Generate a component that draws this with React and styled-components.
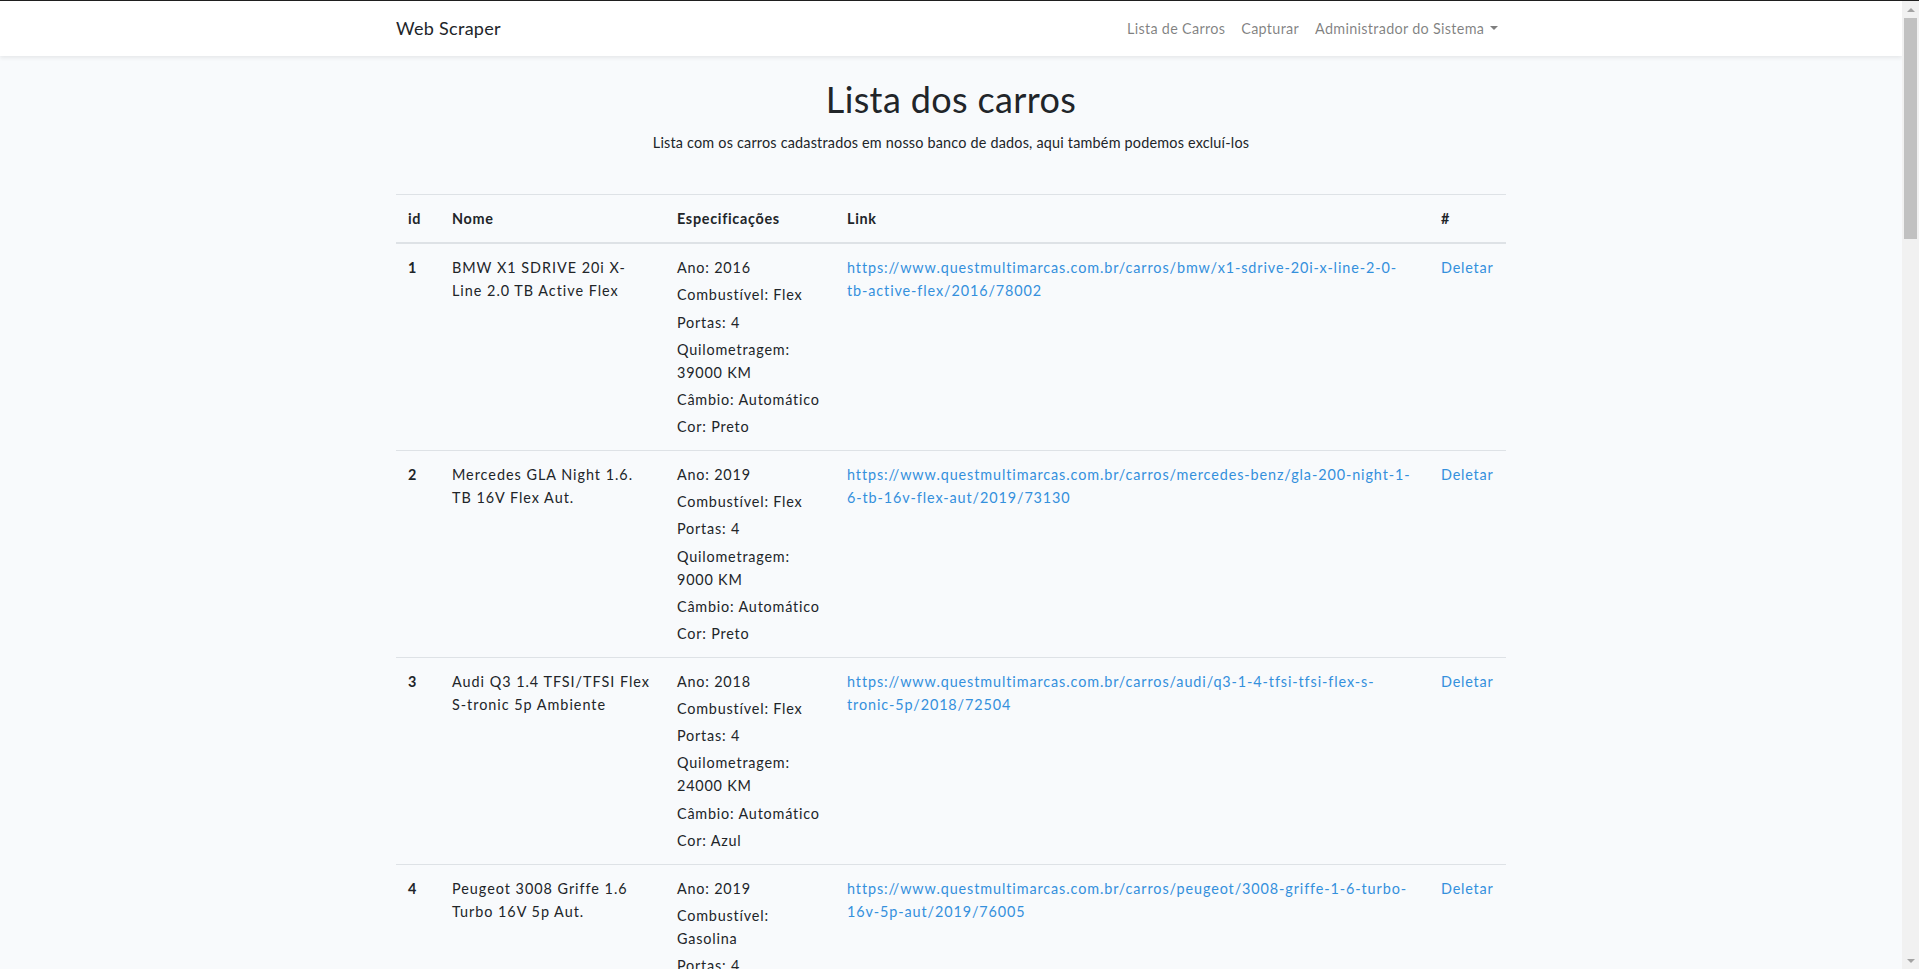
import React from 'react';
import styled, { createGlobalStyle } from 'styled-components';

const colors = {
  text: '#212529',
  muted: 'rgba(0, 0, 0, 0.5)',
  link: '#3490dc',
  border: '#dee2e6',
  bg: '#f8fafc',
};

const GlobalStyle = createGlobalStyle`
  * {
    box-sizing: border-box;
  }
  html, body {
    margin: 0;
    padding: 0;
  }
  body {
    background: ${colors.bg};
    color: ${colors.text};
    font-family: Lato, "Open Sans", sans-serif;
    font-size: 14.4px;
    line-height: 1.6;
    letter-spacing: 0.3px;
    border-top: 1px solid #1f1f1f;
    padding-right: 17px;
  }
`;

// the window's scrollbar, drawn since the headless page has none
const ScrollTrack = styled.div`
  position: fixed;
  top: 1px;
  right: 0;
  width: 17px;
  height: calc(100vh - 1px);
  background: #f1f1f1;
  display: flex;
  flex-direction: column;
  align-items: center;
`;

const ScrollArrow = styled.div`
  width: 17px;
  height: 17px;
  flex: none;
  display: flex;
  align-items: center;
  justify-content: center;
  margin-top: ${props => (props.down ? 'auto' : '0')};
  &::before {
    content: '';
    border-left: 4px solid transparent;
    border-right: 4px solid transparent;
    ${props => (props.down ? 'border-top' : 'border-bottom')}: 4px solid #a3a3a3;
  }
`;

const ScrollThumb = styled.div`
  width: 13px;
  height: 221px;
  background: #c1c1c1;
`;

const Navbar = styled.nav`
  background: #fff;
  box-shadow: 0 2px 4px rgba(0, 0, 0, 0.075);
  padding: 8px 0;
`;

const Container = styled.div`
  max-width: 1140px;
  margin: 0 auto;
  padding: 0 15px;
`;

const NavInner = styled(Container)`
  display: flex;
  align-items: center;
  justify-content: space-between;
`;

const Brand = styled.a`
  color: ${colors.text};
  font-size: 18px;
  line-height: 28.8px;
  padding: 5px 0;
  text-decoration: none;
`;

const NavLinks = styled.ul`
  display: flex;
  list-style: none;
  margin: 0;
  padding: 0;
`;

const NavLink = styled.a`
  display: block;
  padding: 8px;
  color: ${colors.muted};
  text-decoration: none;
  &::after {
    content: ${props => (props.dropdown ? "''" : 'none')};
    display: inline-block;
    margin-left: 0.4em;
    vertical-align: 0.255em;
    border-top: 0.3em solid;
    border-right: 0.3em solid transparent;
    border-left: 0.3em solid transparent;
    border-bottom: 0;
  }
`;

const Main = styled.main`
  padding-top: 22px;
`;

const Header = styled.div`
  text-align: center;
`;

const Title = styled.h1`
  font-size: 36px;
  font-weight: 400;
  line-height: 1.2;
  letter-spacing: 0.35px;
  margin: 0 0 10px;
`;

const Lead = styled.p`
  letter-spacing: 0.2px;
  margin: 0 0 40px;
`;

const Table = styled.table`
  width: 100%;
  table-layout: fixed;
  border-collapse: collapse;
  margin-bottom: 16px;
  letter-spacing: 0.8px;
`;

const Th = styled.th`
  width: ${props => props.w}px;
  padding: 12px;
  text-align: left;
  vertical-align: bottom;
  font-weight: 700;
  letter-spacing: 0.7px;
  border-top: 1px solid ${colors.border};
  border-bottom: 2px solid ${colors.border};
`;

const RowHead = styled.th`
  padding: 12px;
  text-align: left;
  vertical-align: top;
  font-weight: 700;
  border-top: 1px solid ${colors.border};
`;

const Td = styled.td`
  padding: 12px;
  vertical-align: top;
  border-top: 1px solid ${colors.border};
`;

const NameCell = styled(Td)`
  letter-spacing: 0.98px;
`;

const Specs = styled.div`
  display: flex;
  flex-direction: column;
  gap: 4.1px;
`;

const Link = styled.a`
  color: ${colors.link};
  text-decoration: none;
  letter-spacing: ${props => (props.nowrap ? '0.8px' : '0.9px')};
  white-space: ${props => (props.nowrap ? 'nowrap' : 'normal')};
  word-wrap: break-word;
`;

const columns = [
  { label: 'id', w: 44 },
  { label: 'Nome', w: 225 },
  { label: 'Especificações', w: 170 },
  { label: 'Link', w: 594 },
  { label: '#', w: 77 },
];

const cars = [
  {
    id: 1,
    nome: 'BMW X1 SDRIVE 20i X-Line 2.0 TB Active Flex',
    ano: 2016, combustivel: 'Flex', portas: 4, km: 39000, cambio: 'Automático', cor: 'Preto',
    link: 'https://www.questmultimarcas.com.br/carros/bmw/x1-sdrive-20i-x-line-2-0-tb-active-flex/2016/78002',
  },
  {
    id: 2,
    nome: 'Mercedes GLA Night 1.6. TB 16V Flex Aut.',
    ano: 2019, combustivel: 'Flex', portas: 4, km: 9000, cambio: 'Automático', cor: 'Preto',
    link: 'https://www.questmultimarcas.com.br/carros/mercedes-benz/gla-200-night-1-6-tb-16v-flex-aut/2019/73130',
  },
  {
    id: 3,
    nome: 'Audi Q3 1.4 TFSI/TFSI Flex S-tronic 5p Ambiente',
    ano: 2018, combustivel: 'Flex', portas: 4, km: 24000, cambio: 'Automático', cor: 'Azul',
    link: 'https://www.questmultimarcas.com.br/carros/audi/q3-1-4-tfsi-tfsi-flex-s-tronic-5p/2018/72504',
  },
  {
    id: 4,
    nome: 'Peugeot 3008 Griffe 1.6 Turbo 16V 5p Aut.',
    ano: 2019, combustivel: 'Gasolina', portas: 4, km: 31000, cambio: 'Automático', cor: 'Branco',
    link: 'https://www.questmultimarcas.com.br/carros/peugeot/3008-griffe-1-6-turbo-16v-5p-aut/2019/76005',
  },
  {
    id: 5,
    nome: 'Jeep Compass Longitude 2.0 Flex Aut.',
    ano: 2018, combustivel: 'Flex', portas: 4, km: 42000, cambio: 'Automático', cor: 'Prata',
    link: 'https://www.questmultimarcas.com.br/carros/jeep/compass-longitude-2-0-flex-aut/2018/71820',
  },
];

export default function App() {
  return (
    <>
      <GlobalStyle />
      <Navbar>
        <NavInner>
          <Brand href="#">Web Scraper</Brand>
          <NavLinks>
            <li><NavLink href="#">Lista de Carros</NavLink></li>
            <li><NavLink href="#">Capturar</NavLink></li>
            <li><NavLink href="#" dropdown>Administrador do Sistema</NavLink></li>
          </NavLinks>
        </NavInner>
      </Navbar>
      <Main>
        <Container>
          <Header>
            <Title>Lista dos carros</Title>
            <Lead>Lista com os carros cadastrados em nosso banco de dados, aqui também podemos excluí-los</Lead>
          </Header>
          <Table>
            <thead>
              <tr>
                {columns.map(col => (
                  <Th key={col.label} w={col.w}>{col.label}</Th>
                ))}
              </tr>
            </thead>
            <tbody>
              {cars.map(car => (
                <tr key={car.id}>
                  <RowHead scope="row">{car.id}</RowHead>
                  <NameCell>{car.nome}</NameCell>
                  <Td>
                    <Specs>
                      <span>Ano: {car.ano}</span>
                      <span>Combustível: {car.combustivel}</span>
                      <span>Portas: {car.portas}</span>
                      <span>Quilometragem: {car.km} KM</span>
                      <span>Câmbio: {car.cambio}</span>
                      <span>Cor: {car.cor}</span>
                    </Specs>
                  </Td>
                  <Td>
                    <Link href={car.link}>{car.link}</Link>
                  </Td>
                  <Td>
                    <Link href="#" nowrap>Deletar</Link>
                  </Td>
                </tr>
              ))}
            </tbody>
          </Table>
        </Container>
      </Main>
      <ScrollTrack>
        <ScrollArrow />
        <ScrollThumb />
        <ScrollArrow down />
      </ScrollTrack>
    </>
  );
}
